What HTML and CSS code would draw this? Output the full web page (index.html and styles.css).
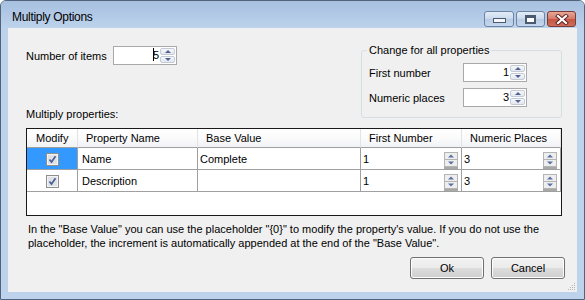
FILE: index.html
```html
<!DOCTYPE html>
<html lang="en">
<head>
    <meta charset="UTF-8">
    <title>Multiply Options</title>
    <link rel="stylesheet" href="styles.css">
</head>
<body>
    <div class="window">
        <div class="titlebar">
            <span class="title">Multiply Options</span>
            <div class="caption-btns">
                <span class="cap-btn min"><i></i></span>
                <span class="cap-btn max"><i></i></span>
                <span class="cap-btn close">
                    <svg width="14" height="11" viewBox="0 0 14 11">
                        <path d="M3 2 L11 9 M11 2 L3 9" stroke="#5a2020" stroke-width="4" stroke-linecap="square"/>
                        <path d="M3 2 L11 9 M11 2 L3 9" stroke="#ffffff" stroke-width="2.2" stroke-linecap="square"/>
                    </svg>
                </span>
            </div>
        </div>
        <div class="client">
            <div class="top">
                <div class="left-col">
                    <div class="field">
                        <label class="field-label">Number of items</label>
                        <div class="spin items">
                            <span class="value"><i class="caret"></i>5</span>
                            <span class="spin-btns"><b class="up"></b><b class="down"></b></span>
                        </div>
                    </div>
                    <div class="section-label">Multiply properties:</div>
                </div>
                <div class="group">
                    <span class="group-title">Change for all properties</span>
                    <div class="group-row">
                        <label>First number</label>
                        <div class="spin">
                            <span class="value">1</span>
                            <span class="spin-btns"><b class="up"></b><b class="down"></b></span>
                        </div>
                    </div>
                    <div class="group-row">
                        <label>Numeric places</label>
                        <div class="spin">
                            <span class="value">3</span>
                            <span class="spin-btns"><b class="up"></b><b class="down"></b></span>
                        </div>
                    </div>
                </div>
            </div>

            <div class="grid">
                <div class="hcell">Modify</div>
                <div class="hcell">Property Name</div>
                <div class="hcell">Base Value</div>
                <div class="hcell">First Number</div>
                <div class="hcell">Numeric Places</div>

                <div class="cell check selected"><svg class="cb" width="13" height="13" viewBox="0 0 13 13"><rect x="0.5" y="0.5" width="12" height="12" fill="#f4f4f4" stroke="#8e8f8f"/><rect x="2" y="2" width="9" height="9" fill="#dfe2e6"/><path d="M3.5 6.5 L5.5 9 L9.5 3.2" fill="none" stroke="#4a5f97" stroke-width="1.7"/></svg></div>
                <div class="cell name">Name</div>
                <div class="cell base">Complete</div>
                <div class="cell num"><span>1</span><svg class="cell-spin" width="14" height="17" viewBox="0 0 14 17"><rect x="0.5" y="0.5" width="13" height="14" fill="#eeeeee" stroke="#b4b4b4"/><line x1="1" y1="7.5" x2="13" y2="7.5" stroke="#b4b4b4"/><path d="M4 5.5 L7 2.5 L10 5.5 Z" fill="#5b6fa5"/><path d="M4 9.5 L7 12.5 L10 9.5 Z" fill="#5b6fa5"/><rect x="0" y="15" width="14" height="2" fill="#a8a8a8"/></svg></div>
                <div class="cell num"><span>3</span><svg class="cell-spin" width="14" height="17" viewBox="0 0 14 17"><rect x="0.5" y="0.5" width="13" height="14" fill="#eeeeee" stroke="#b4b4b4"/><line x1="1" y1="7.5" x2="13" y2="7.5" stroke="#b4b4b4"/><path d="M4 5.5 L7 2.5 L10 5.5 Z" fill="#5b6fa5"/><path d="M4 9.5 L7 12.5 L10 9.5 Z" fill="#5b6fa5"/><rect x="0" y="15" width="14" height="2" fill="#a8a8a8"/></svg></div>

                <div class="cell check"><svg class="cb" width="13" height="13" viewBox="0 0 13 13"><rect x="0.5" y="0.5" width="12" height="12" fill="#f4f4f4" stroke="#8e8f8f"/><rect x="2" y="2" width="9" height="9" fill="#dfe2e6"/><path d="M3.5 6.5 L5.5 9 L9.5 3.2" fill="none" stroke="#4a5f97" stroke-width="1.7"/></svg></div>
                <div class="cell name">Description</div>
                <div class="cell base"></div>
                <div class="cell num"><span>1</span><svg class="cell-spin" width="14" height="17" viewBox="0 0 14 17"><rect x="0.5" y="0.5" width="13" height="14" fill="#eeeeee" stroke="#b4b4b4"/><line x1="1" y1="7.5" x2="13" y2="7.5" stroke="#b4b4b4"/><path d="M4 5.5 L7 2.5 L10 5.5 Z" fill="#5b6fa5"/><path d="M4 9.5 L7 12.5 L10 9.5 Z" fill="#5b6fa5"/><rect x="0" y="15" width="14" height="2" fill="#a8a8a8"/></svg></div>
                <div class="cell num"><span>3</span><svg class="cell-spin" width="14" height="17" viewBox="0 0 14 17"><rect x="0.5" y="0.5" width="13" height="14" fill="#eeeeee" stroke="#b4b4b4"/><line x1="1" y1="7.5" x2="13" y2="7.5" stroke="#b4b4b4"/><path d="M4 5.5 L7 2.5 L10 5.5 Z" fill="#5b6fa5"/><path d="M4 9.5 L7 12.5 L10 9.5 Z" fill="#5b6fa5"/><rect x="0" y="15" width="14" height="2" fill="#a8a8a8"/></svg></div>
            </div>

            <p class="note">In the "Base Value" you can use the placeholder "{0}" to modify the property's value. If you do not use the<br>placeholder, the increment is automatically appended at the end of the "Base Value".</p>

            <div class="actions">
                <button class="btn">Ok</button>
                <button class="btn">Cancel</button>
            </div>
            <svg class="grip" width="8" height="8" viewBox="0 0 8 8">
                <rect x="6" y="0" width="1" height="1" fill="#b8b8b8"/>
                <rect x="4" y="2" width="1" height="1" fill="#b8b8b8"/><rect x="6" y="2" width="1" height="1" fill="#b8b8b8"/>
                <rect x="2" y="4" width="1" height="1" fill="#b8b8b8"/><rect x="4" y="4" width="1" height="1" fill="#b8b8b8"/><rect x="6" y="4" width="1" height="1" fill="#b8b8b8"/>
                <rect x="0" y="6" width="1" height="1" fill="#b8b8b8"/><rect x="2" y="6" width="1" height="1" fill="#b8b8b8"/><rect x="4" y="6" width="1" height="1" fill="#b8b8b8"/><rect x="6" y="6" width="1" height="1" fill="#b8b8b8"/>
            </svg>
        </div>
    </div>
</body>
</html>
```

FILE: styles.css
```css
body {
    margin: 0;
    font-family: "Liberation Sans", Arial, sans-serif;
    font-size: 11px;
    color: #000;
    background: #fff;
}
.window {
    width: 585px;
    height: 300px;
    box-sizing: border-box;
    border: 1px solid #52647c;
    border-radius: 6px 6px 0 0;
    background: #bdd3ec;
    padding: 0 7px 7px;
    display: flex;
    flex-direction: column;
}
.titlebar {
    height: 27px;
    margin: 0 -7px;
    padding: 0 8px 0 11px;
    border-radius: 5px 5px 0 0;
    background: linear-gradient(#a6c0df, #b4cbe7 60%, #bdd3ec);
    display: flex;
    align-items: flex-start;
    justify-content: space-between;
}
.title {
    font-size: 12px;
    margin-top: 9px;
    letter-spacing: -0.3px;
}
.caption-btns {
    display: flex;
    gap: 2px;
    margin-top: 10px;
}
.cap-btn {
    width: 27px;
    height: 14px;
    border: 1px solid #6e84a3;
    border-radius: 3px;
    background: linear-gradient(#e3ecf6, #c9d9ec 50%, #b6cae3 50%, #c5d7ee);
    display: flex;
    align-items: center;
    justify-content: center;
}
.cap-btn.min {
    width: 28px;
}
.cap-btn.min i {
    width: 11px;
    height: 3px;
    margin-top: 3px;
    border: 1px solid #4b5a6e;
    background: #f4f6f9;
}
.cap-btn.max i {
    width: 9px;
    height: 6px;
    border: 1px solid #4b5a6e;
    background: #fff;
    box-shadow: inset 0 0 0 1px #4b5a6e;
    border-top-width: 2px;
}
.cap-btn.close {
    border-color: #7b3b36;
    background: linear-gradient(#e6a797, #d47a69 50%, #c45542 50%, #d06c5a);
}
.client {
    flex: 1;
    background: #f0f0f0;
    padding: 0 15px 0 18px;
    position: relative;
}
.top {
    display: flex;
    justify-content: space-between;
}
.left-col {
    padding-top: 18px;
}
.field {
    display: flex;
    align-items: center;
}
.field-label {
    width: 87px;
}
.section-label {
    margin-top: 43px;
    line-height: 13px;
}
.spin {
    width: 64px;
    height: 19px;
    box-sizing: border-box;
    border: 1px solid #a9a9a9;
    background: #fff;
    display: flex;
    align-items: stretch;
}
.spin .value {
    flex: 1;
    text-align: right;
    line-height: 17px;
    padding-right: 1px;
    position: relative;
}
.caret {
    display: inline-block;
    width: 1px;
    height: 13px;
    background: #000;
    vertical-align: -2px;
    margin-right: -1px;
}
.spin-btns {
    width: 15px;
    display: flex;
    flex-direction: column;
    gap: 1px;
    padding: 1px 1px 1px 0;
}
.spin-btns b {
    flex: 1;
    border: 1px solid #c5cbd6;
    border-radius: 2px;
    background: linear-gradient(#f6f7f9, #e3e7ee);
    display: flex;
    align-items: center;
    justify-content: center;
}
.spin-btns .up::after {
    content: "";
    border-left: 3px solid transparent;
    border-right: 3px solid transparent;
    border-bottom: 3px solid #4e6295;
}
.spin-btns .down::after {
    content: "";
    border-left: 3px solid transparent;
    border-right: 3px solid transparent;
    border-top: 3px solid #4e6295;
}
.group {
    width: 201px;
    height: 68px;
    box-sizing: border-box;
    margin-top: 22px;
    border: 1px solid #d5dfe5;
    border-radius: 3px;
    padding: 12px 0 0 7px;
    position: relative;
}
.group-title {
    position: absolute;
    top: -7px;
    left: 5px;
    padding: 0 2px;
    background: #f0f0f0;
    line-height: 13px;
}
.group-row {
    display: flex;
    align-items: center;
    margin-bottom: 6px;
}
.group-row label {
    width: 94px;
}
.grid {
    margin-top: 7px;
    width: 536px;
    height: 88px;
    box-sizing: border-box;
    border: 1px solid #1a1a1a;
    background: #fff;
    display: grid;
    grid-template-columns: 51px 120px 163px 101px 99px;
    grid-template-rows: 19px 22px 22px;
    align-content: start;
}
.hcell {
    border-right: 1px solid #e2e3e5;
    border-bottom: 1px solid #a0a0a0;
    background: linear-gradient(#ffffff, #fbfbfc 50%, #f1f2f4);
    padding-left: 8px;
    line-height: 18px;
}
.hcell:first-child {
    padding-left: 9px;
}
.cell {
    border-right: 1px solid #a0a0a0;
    border-bottom: 1px solid #a0a0a0;
    display: flex;
    align-items: center;
    padding-top: 1px;
}
.cell.check {
    justify-content: center;
    padding-left: 1px;
}
.cell.selected {
    background: #3399ff;
}
.cell.name {
    padding-left: 4px;
}
.cell.base {
    padding-left: 2px;
}
.cell.num {
    justify-content: space-between;
    padding-left: 2px;
    padding-right: 3px;
}
.cell-spin {
    margin-top: 3px;
}
.note {
    margin: 6px 0 0 2px;
    line-height: 14px;
}
.actions {
    display: flex;
    justify-content: flex-end;
    gap: 7px;
    margin-top: 7px;
    margin-right: -3px;
}
.btn {
    width: 74px;
    height: 22px;
    border: 1px solid #707070;
    border-radius: 3px;
    background: linear-gradient(#f2f2f2, #ebebeb 50%, #dddddd 50%, #cfcfcf);
    box-shadow: inset 0 0 0 1px #fcfcfc;
    font-family: "Liberation Sans", Arial, sans-serif;
    font-size: 11px;
    color: #000;
    padding: 0;
}
.grip {
    position: absolute;
    right: 1px;
    bottom: 1px;
}
```
